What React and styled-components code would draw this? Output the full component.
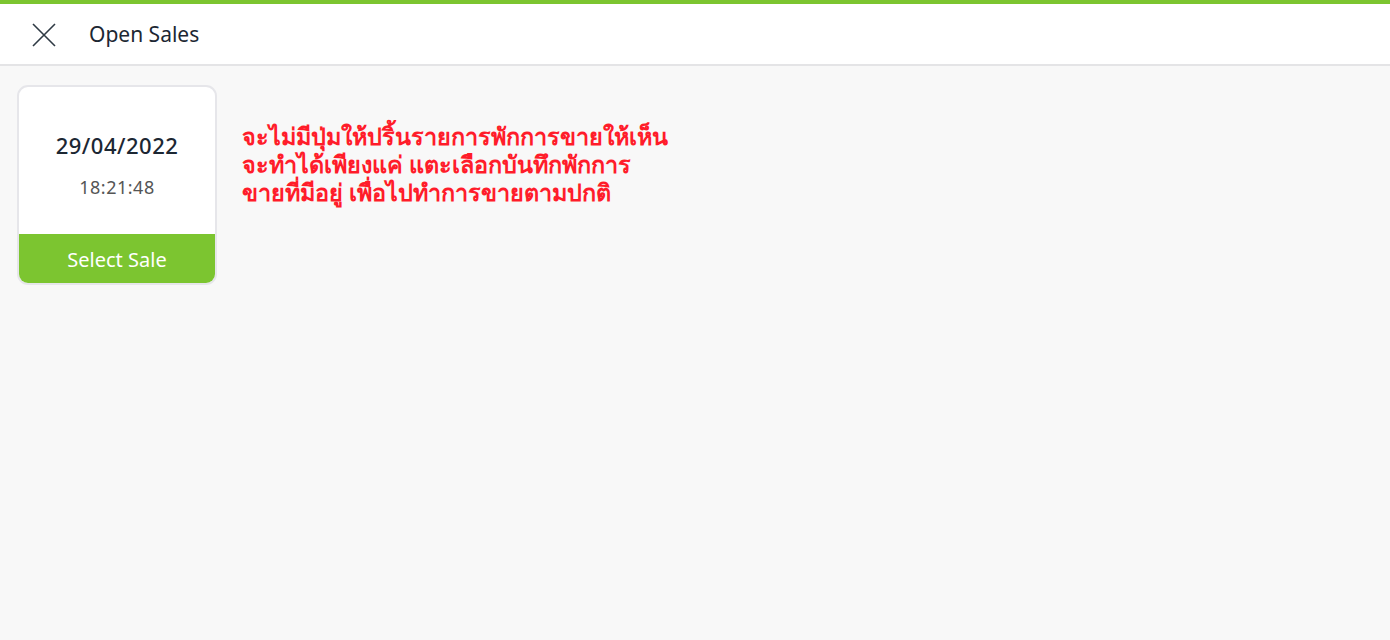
import styled, { createGlobalStyle } from "styled-components";

const GlobalStyle = createGlobalStyle`
  html, body {
    margin: 0;
    padding: 0;
    background: #f8f8f8;
    font-family: "Noto Sans", "Liberation Sans", sans-serif;
  }
`;

const Page = styled.div`
  min-height: 640px;
  border-top: 4px solid #7cc530;
  background: #f8f8f8;
`;

const Header = styled.div`
  height: 60px;
  display: flex;
  align-items: center;
  background: #fff;
  border-bottom: 2px solid #e4e4e6;
`;

const CloseButton = styled.button`
  border: none;
  background: transparent;
  width: 89px;
  height: 60px;
  padding: 2px 0 0 31px;
  display: flex;
  align-items: center;
  cursor: pointer;
`;

const Title = styled.div`
  font-size: 21px;
  color: #1c2733;
`;

const Content = styled.div`
  display: flex;
  align-items: flex-start;
  gap: 25px;
  padding: 19px 17px;
`;

const Card = styled.div`
  width: 200px;
  height: 200px;
  box-sizing: border-box;
  border: 2px solid #e6e6ea;
  border-radius: 11px;
  background: #fff;
  overflow: hidden;
  display: flex;
  flex-direction: column;
`;

const CardBody = styled.div`
  flex: 1;
  display: flex;
  flex-direction: column;
  align-items: center;
  padding-top: 43px;
`;

const DateText = styled.div`
  font-size: 22px;
  font-weight: 500;
  color: #1c2733;
  letter-spacing: 0.5px;
`;

const TimeText = styled.div`
  font-size: 18px;
  color: #555;
  margin-top: 15px;
  letter-spacing: 0.5px;
`;

const SelectButton = styled.button`
  height: 51px;
  margin: 0 -2px -2px;
  border: none;
  background: #7cc530;
  color: #fff;
  font-family: inherit;
  font-size: 20px;
  cursor: pointer;
`;

const Note = styled.div`
  margin-top: 37px;
  color: #ff1c2a;
  font-weight: bold;
  font-size: 23.4px;
  line-height: 28px;
  white-space: nowrap;
`;

export default function App() {
  return (
    <>
      <GlobalStyle />
      <Page>
        <Header>
          <CloseButton aria-label="close">
            <svg width="26" height="26" viewBox="0 0 26 26">
              <path
                d="M2 2 L24 24 M24 2 L2 24"
                stroke="#2f3a44"
                strokeWidth="1.6"
                fill="none"
              />
            </svg>
          </CloseButton>
          <Title>Open Sales</Title>
        </Header>
        <Content>
          <Card>
            <CardBody>
              <DateText>29/04/2022</DateText>
              <TimeText>18:21:48</TimeText>
            </CardBody>
            <SelectButton>Select Sale</SelectButton>
          </Card>
          <Note>
            จะไม่มีปุ่มให้ปริ้นรายการพักการขายให้เห็น
            <br />
            จะทำได้เพียงแค่ แตะเลือกบันทึกพักการ
            <br />
            ขายที่มีอยู่ เพื่อไปทำการขายตามปกติ
          </Note>
        </Content>
      </Page>
    </>
  );
}
